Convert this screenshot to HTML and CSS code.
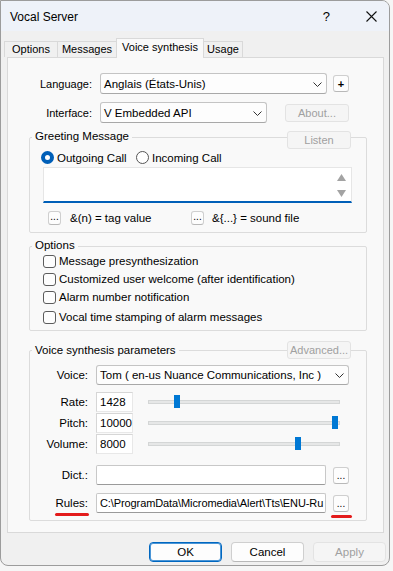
FILE: index.html
```html
<!DOCTYPE html>
<html>
<head>
<meta charset="utf-8">
<link rel="stylesheet" href="styles.css">
</head>
<body>
<div class="window">
  <div class="titlebar">
    <span class="title">Vocal Server</span>
    <span class="help">?</span>
    <svg class="close" width="11" height="11" viewBox="0 0 11 11"><path d="M0.5 0.5L10.5 10.5M10.5 0.5L0.5 10.5" stroke="#111" stroke-width="1.1" fill="none"/></svg>
  </div>
  <div class="tabs">
    <div class="tab t-options">Options</div>
    <div class="tab t-messages">Messages</div>
    <div class="tab t-voice selected">Voice synthesis</div>
    <div class="tab t-usage">Usage</div>
  </div>
  <div class="panel">
    <div class="row row-lang">
      <span class="lbl">Language:</span>
      <div class="combo combo-lang"><span>Anglais (États-Unis)</span><svg class="chev" width="9" height="5" viewBox="0 0 9 5"><path d="M0.5 0.5L4.5 4.5L8.5 0.5" stroke="#333" fill="none"/></svg></div>
      <div class="btn btn-plus">+</div>
    </div>
    <div class="row row-iface">
      <span class="lbl">Interface:</span>
      <div class="combo combo-iface"><span>V Embedded API</span><svg class="chev" width="9" height="5" viewBox="0 0 9 5"><path d="M0.5 0.5L4.5 4.5L8.5 0.5" stroke="#333" fill="none"/></svg></div>
      <div class="btn disabled btn-about">About...</div>
    </div>

    <div class="group g-greet">
      <div class="group-head">
        <span class="legend">Greeting Message</span>
        <div class="btn disabled btn-head">Listen</div>
      </div>
      <div class="group-box">
        <div class="radios">
          <div class="radio-item ri-out"><span class="radio on"></span><span>Outgoing Call</span></div>
          <div class="radio-item"><span class="radio"></span><span>Incoming Call</span></div>
        </div>
        <div class="memo">
          <div class="scroll">
            <svg width="9" height="7" viewBox="0 0 9 7"><path d="M0 7L4.5 0L9 7Z" fill="#a3a3a3"/></svg>
            <svg width="9" height="7" viewBox="0 0 9 7"><path d="M0 0L4.5 7L9 0Z" fill="#a3a3a3"/></svg>
          </div>
        </div>
        <div class="tags">
          <div class="btn dots">...</div><span class="tag-text tag-first">&amp;(n) = tag value</span>
          <div class="btn dots">...</div><span class="tag-text tag-second">&amp;{...} = sound file</span>
        </div>
      </div>
    </div>

    <div class="group g-options">
      <div class="group-head">
        <span class="legend">Options</span>
      </div>
      <div class="group-box">
        <div class="check-row"><span class="check"></span><span>Message presynthesization</span></div>
        <div class="check-row"><span class="check"></span><span>Customized user welcome (after identification)</span></div>
        <div class="check-row"><span class="check"></span><span>Alarm number notification</span></div>
        <div class="check-row last"><span class="check"></span><span>Vocal time stamping of alarm messages</span></div>
      </div>
    </div>

    <div class="group g-voice">
      <div class="group-head">
        <span class="legend">Voice synthesis parameters</span>
        <div class="btn disabled btn-head btn-adv">Advanced...</div>
      </div>
      <div class="group-box">
        <div class="vrow vrow-voice">
          <span class="vlbl">Voice:</span>
          <div class="combo combo-voice"><span>Tom ( en-us Nuance Communications, Inc )</span><svg class="chev" width="9" height="5" viewBox="0 0 9 5"><path d="M0.5 0.5L4.5 4.5L8.5 0.5" stroke="#333" fill="none"/></svg></div>
        </div>
        <div class="vrow vrow-rate">
          <span class="vlbl">Rate:</span>
          <div class="num">1428</div>
          <div class="slider"><div class="track"></div><div class="thumb" style="left:26px"></div></div>
        </div>
        <div class="vrow vrow-tight">
          <span class="vlbl">Pitch:</span>
          <div class="num">10000</div>
          <div class="slider"><div class="track"></div><div class="thumb" style="left:184px"></div></div>
        </div>
        <div class="vrow vrow-tight">
          <span class="vlbl">Volume:</span>
          <div class="num">8000</div>
          <div class="slider"><div class="track"></div><div class="thumb" style="left:147px"></div></div>
        </div>
        <div class="vrow vrow-dict">
          <span class="vlbl">Dict.:</span>
          <div class="field"></div>
          <div class="btn btn-browse">...</div>
        </div>
        <div class="vrow vrow-rules">
          <span class="vlbl"><span class="mark">Rules:</span></span>
          <div class="field"><span class="path">C:\ProgramData\Micromedia\Alert\Tts\ENU-Ru</span></div>
          <div class="btn btn-browse mark2">...</div>
        </div>
      </div>
    </div>
  </div>
  <div class="footer">
    <div class="btn fbtn default">OK</div>
    <div class="btn fbtn">Cancel</div>
    <div class="btn fbtn disabled">Apply</div>
  </div>
</div>
</body>
</html>
```

FILE: styles.css
```css
* { box-sizing: border-box; }
html, body { margin: 0; padding: 0; }
body {
  background: #f6f6f6;
  width: 393px;
  height: 571px;
  overflow: hidden;
  font-family: "Liberation Sans", Arial, sans-serif;
  font-size: 11px;
  color: #000;
}
.window {
  width: 390px;
  height: 566px;
  background: #f0f0f0;
  border: 1px solid #9c9c9c;
  border-radius: 0 8px 8px 8px;
  overflow: hidden;
}
.titlebar {
  height: 30px;
  background: #eef2f9;
  display: flex;
  align-items: center;
  padding-left: 9px;
}
.title { font-size: 12px; flex: 1; margin-top: 1px; }
.help { font-size: 13px; margin-right: 36px; }
.close { margin-right: 12px; }

.tabs {
  display: flex;
  align-items: flex-end;
  margin: 7px 0 0 3px;
  height: 19px;
}
.tab {
  height: 16px;
  line-height: 15px;
  border-top: 1px solid #d9d9d9;
  border-left: 1px solid #d9d9d9;
  text-align: center;
  background: #f0f0f0;
}
.t-options { width: 53px; }
.t-messages { width: 59px; }
.t-voice { width: 88px; }
.t-usage { width: 39px; border-left: none; border-right: 1px solid #d9d9d9; }
.tab.selected {
  height: 20px;
  margin-bottom: -1px;
  background: #f9f9f9;
  border-right: 1px solid #d9d9d9;
  position: relative;
  z-index: 1;
  line-height: 16px;
}
.panel {
  margin-left: 6px;
  width: 377px;
  height: 476px;
  background: #f9f9f9;
  border: 1px solid #d9d9d9;
}

.row { display: flex; align-items: center; height: 21px; }
.row-lang { margin-top: 15px; }
.row-iface { margin-top: 8px; }
.lbl { width: 84px; text-align: right; margin-right: 8px; }

.combo {
  height: 21px;
  background: #fdfdfd;
  border: 1px solid #c4c4c4;
  border-bottom-color: #a8a8a8;
  border-radius: 3px;
  display: flex;
  align-items: center;
  justify-content: space-between;
  padding: 0 4px 0 3px;
  font-size: 11.5px;
}
.combo-lang { width: 227px; }
.combo-iface { width: 167px; }
.combo-voice { width: 253px; height: 20px; }
.chev { margin-top: 1px; }

.btn {
  background: #fdfdfd;
  border: 1px solid #cfcfcf;
  border-bottom-color: #b8b8b8;
  border-radius: 3px;
  display: flex;
  align-items: center;
  justify-content: center;
}
.btn.disabled {
  background: #f5f5f5;
  border-color: #e3e3e3;
  color: #a0a0a0;
}
.btn-plus { width: 16px; height: 17px; margin-left: 6px; font-size: 11px; font-weight: bold; }
.btn-about { width: 64px; height: 18px; margin-left: 18px; }

.group { margin-left: 21px; width: 338px; }
.group-head {
  display: flex;
  align-items: flex-start;
  height: 20px;
  padding-left: 3px;
  position: relative;
  z-index: 1;
}
.legend { background: #f9f9f9; padding: 0 3px; line-height: 15px; font-size: 11.5px; }
.btn-head { width: 64px; height: 18px; margin-left: auto; margin-right: 16px; margin-top: 2px; }
.group-box {
  border: 1px solid #dcdcdc;
  border-radius: 2px;
}

.g-greet { margin-top: 6px; }
.g-greet .group-box { margin-top: -12px; padding: 12px 0 7px 0; }
.radios { display: flex; align-items: center; height: 15px; padding-left: 11px; font-size: 11.5px; }
.radio-item { display: flex; align-items: center; }
.ri-out { width: 95px; }
.radio {
  width: 13px; height: 13px;
  border: 1px solid #555;
  border-radius: 50%;
  background: #fff;
  margin-right: 3px;
  flex: none;
}
.radio.on {
  border: 4px solid #005fb8;
  background: #fff;
}
.memo {
  margin: 2px 0 0 13px;
  width: 309px;
  height: 36px;
  background: #fff;
  border: 1px solid #e6e6e6;
  border-bottom: 2px solid #005fb8;
  display: flex;
  justify-content: flex-end;
}
.scroll {
  width: 16px;
  display: flex;
  flex-direction: column;
  justify-content: space-between;
  align-items: center;
  padding: 6px 0 4px 0;
  margin-right: 2px;
}
.tags { display: flex; align-items: center; height: 14px; margin-top: 8px; padding-left: 18px; font-size: 11.5px; }
.dots { width: 13px; height: 14px; font-size: 10px; align-items: flex-end; line-height: 10px; padding-bottom: 2px; flex: none; }
.tag-text { margin-left: 9px; }
.tag-first { width: 121px; }
.tag-second { margin-left: 8px; }

.g-options { margin-top: 5px; }
.g-options .group-head { height: 15px; }
.g-options .group-box { margin-top: -7px; padding: 5px 0 4px 13px; }
.check-row { display: flex; align-items: center; height: 18px; font-size: 11.5px; }
.check-row.last { margin-top: 2px; }
.check {
  width: 13px; height: 13px;
  border: 1px solid #5c5c5c;
  border-radius: 3px;
  background: #fdfdfd;
  margin-right: 3px;
  flex: none;
}

.g-voice { margin-top: 10px; }
.g-voice .group-head { height: 18px; }
.g-voice .legend { margin-top: 2px; }
.g-voice .btn-head { margin-top: 0; }
.g-voice .group-box { margin-top: -9px; padding: 14px 0 7px 0; }
.vrow { display: flex; align-items: center; height: 20px; font-size: 11.5px; }
.vlbl { width: 58px; text-align: right; margin-right: 8px; }
.vrow-rate { margin-top: 7px; }
.vrow-tight { margin-top: 1px; }
.vrow-dict { margin-top: 11px; }
.vrow-rules { margin-top: 8px; }
.num {
  width: 37px;
  height: 20px;
  background: #fff;
  border: 1px solid #d6d6d6;
  border-right-color: #e8e8e8;
  border-bottom-color: #e8e8e8;
  padding-left: 3px;
  line-height: 18px;
}
.slider { position: relative; width: 192px; height: 20px; margin-left: 15px; }
.track {
  position: absolute; left: 0; top: 8px;
  width: 192px; height: 4px;
  background: #e6e7e7;
  border: 1px solid #d4d6d6;
}
.thumb {
  position: absolute; top: 3px;
  width: 6px; height: 13px;
  background: #0078d4;
}
.field {
  width: 230px; height: 20px;
  background: #fff;
  border: 1px solid #c8c8c8;
  border-bottom-color: #9a9a9a;
  border-radius: 2px;
  overflow: hidden;
  white-space: nowrap;
  line-height: 18px;
  padding-left: 3px;
}
.path { font-size: 11px; letter-spacing: -0.1px; }
.btn-browse { width: 16px; height: 17px; margin-left: 7px; font-size: 10px; align-items: flex-end; padding-bottom: 3px; line-height: 8px; }
.mark { position: relative; }
.mark::after {
  content: "";
  position: absolute; left: 0; right: -1px; bottom: -7px;
  height: 3px; border-radius: 2px;
  background: #e31b1b;
}
.mark2 { position: relative; }
.mark2::after {
  content: "";
  position: absolute; left: -3px; right: -4px; bottom: -7px;
  height: 3px; border-radius: 2px;
  background: #e31b1b;
}

.footer {
  display: flex;
  justify-content: flex-end;
  gap: 9px;
  margin-top: 9px;
  padding-right: 3px;
}
.fbtn { width: 73px; height: 20px; font-size: 11.5px; border-radius: 4px; }
.fbtn.default { border: 1px solid #0067c0; box-shadow: inset 0 0 0 1px #4a95d6; }
```
